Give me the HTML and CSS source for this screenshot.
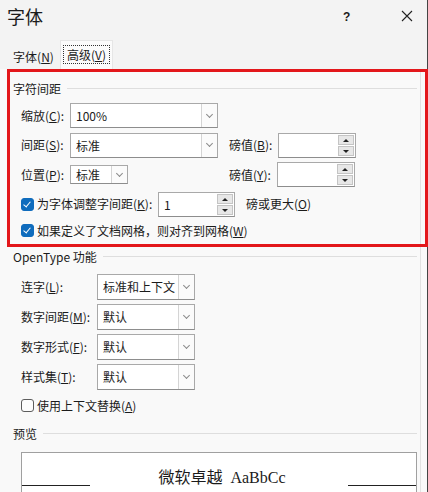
FILE: index.html
```html
<!DOCTYPE html>
<html lang="zh-CN">
<head>
  <meta charset="UTF-8">
  <title>字体</title>
  <link rel="stylesheet" href="styles.css">
</head>
<body>
  <div class="dialog">
    <div class="titlebar">
      <span class="title">字体</span>
      <span class="help">?</span>
      <span class="close">
        <svg width="12" height="12" viewBox="0 0 12 12"><path d="M1 1L11 11M11 1L1 11" stroke="#222" stroke-width="1.1" fill="none"/></svg>
      </span>
    </div>

    <div class="tabs">
      <span class="tab">字体(<u>N</u>)</span>
      <span class="tab active"><span class="focus">高级(<u>V</u>)</span></span>
    </div>

    <!-- 字符间距 -->
    <div class="group mark">
      <div class="legend"><span>字符间距</span></div>
      <div class="row first">
        <span class="lbl w49">缩放(<u>C</u>):</span>
        <div class="combo w148"><span class="val">100%</span><span class="drop"></span></div>
      </div>
      <div class="row">
        <span class="lbl w49">间距(<u>S</u>):</span>
        <div class="combo w148"><span class="val">标准</span><span class="drop"></span></div>
        <span class="lbl w49 ml11">磅值(<u>B</u>):</span>
        <div class="spin w78"><span class="val"></span><span class="arrows"><i class="up"></i><i class="down"></i></span></div>
      </div>
      <div class="row">
        <span class="lbl w49">位置(<u>P</u>):</span>
        <div class="cell w148"><div class="combo w58"><span class="val">标准</span><span class="drop"></span></div></div>
        <span class="lbl w48 ml11">磅值(<u>Y</u>):</span>
        <div class="spin w78"><span class="val"></span><span class="arrows"><i class="up"></i><i class="down"></i></span></div>
      </div>
      <div class="row">
        <span class="check on"></span>
        <span class="lbl w121">为字体调整字间距(<u>K</u>):</span>
        <div class="spin w77"><span class="val">1</span><span class="arrows"><i class="up"></i><i class="down"></i></span></div>
        <span class="lbl ml11">磅或更大(<u>O</u>)</span>
      </div>
      <div class="row short">
        <span class="check on"></span>
        <span class="lbl">如果定义了文档网格，则对齐到网格(<u>W</u>)</span>
      </div>
    </div>

    <!-- OpenType 功能 -->
    <div class="group opentype">
      <div class="legend"><span>OpenType 功能</span></div>
      <div class="row tall first">
        <span class="lbl w76">连字(<u>L</u>):</span>
        <div class="combo w98"><span class="val">标准和上下文</span><span class="drop"></span></div>
      </div>
      <div class="row tall">
        <span class="lbl w76">数字间距(<u>M</u>):</span>
        <div class="combo w98"><span class="val">默认</span><span class="drop"></span></div>
      </div>
      <div class="row tall">
        <span class="lbl w76">数字形式(<u>F</u>):</span>
        <div class="combo w98"><span class="val">默认</span><span class="drop"></span></div>
      </div>
      <div class="row tall">
        <span class="lbl w76">样式集(<u>T</u>):</span>
        <div class="combo w98"><span class="val">默认</span><span class="drop"></span></div>
      </div>
      <div class="row short opt">
        <span class="check"></span>
        <span class="lbl">使用上下文替换(<u>A</u>)</span>
      </div>
    </div>

    <!-- 预览 -->
    <div class="group preview">
      <div class="legend"><span>预览</span></div>
      <div class="preview-box">
        <span class="rule"></span>
        <span class="sample">微软卓越&nbsp; AaBbCc</span>
        <span class="rule"></span>
      </div>
    </div>
  </div>
</body>
</html>
```

FILE: styles.css
```css
:root {
  --bg: #f9f9f9;
  --text: #1b1b1b;
  --line: #dedede;
  --field: #ffffff;
  --field-border: #a9a9a9;
  --red: #e3171b;
  --blue: #0f6cbd;
}
* { margin: 0; padding: 0; box-sizing: border-box; }
body {
  font-family: "Noto Sans CJK SC", "Noto Sans", sans-serif;
  font-size: 12px;
  color: var(--text);
  background: var(--bg);
  overflow: hidden;
}
u { text-decoration: underline; text-underline-offset: 1px; }

.dialog {
  width: 428px;
  height: 492px;
  background: var(--bg);
  border-right: 1px solid #444;
  box-shadow: inset -6px 0 0 var(--bg), inset -7px 0 0 #e2e2e2;
}

/* 标题栏 */
.titlebar {
  height: 34px;
  display: flex;
  align-items: center;
  padding-left: 7px;
  background: #f3f3f3;
}
.title { font-size: 18px; line-height: 1; flex: 1; margin-top: -3px; }
.help { font-size: 12px; font-weight: bold; font-family: "Liberation Sans", sans-serif; width: 58px; margin-top: -1px; }
.close { width: 26px; display: flex; margin-top: -2px; }

/* 选项卡 */
.tabs {
  height: 35px;
  display: flex;
  align-items: flex-end;
  padding-left: 7px;
  background: #f3f3f3;
}
.tab {
  height: 25px;
  display: flex;
  align-items: center;
  justify-content: center;
  white-space: nowrap;
  width: 53px;
}
.tab.active {
  height: 29px;
  width: 53px;
  background: #fbfbfb;
  border: 1px solid #e6e6e6;
  border-bottom: none;
  padding: 3px 2px 5px;
}
.focus {
  border: 1px dotted #333;
  display: flex;
  align-items: center;
  justify-content: center;
  width: 47px;
  height: 19px;
}

/* 分组 */
.group {
  width: 421px;
  margin-left: 7px;
  border: 3px solid transparent;
  padding: 0 8px 0 3px;
}
.group.mark { border-color: var(--red); padding-top: 8px; padding-bottom: 3px; }
.group.opentype { padding-top: 0; margin-top: -1px; }
.group.preview { margin-top: 4px; }

.legend {
  height: 16px;
  display: flex;
  align-items: center;
  white-space: nowrap;
}
.legend::after {
  content: "";
  flex: 1;
  height: 1px;
  background: var(--line);
  margin-left: 6px;
}

.row {
  display: flex;
  align-items: center;
  height: 25px;
  margin-top: 4.5px;
  padding-left: 8px;
}
.row.first { margin-top: 7px; }
.row.tall { height: 26px; margin-top: 4px; }
.row.tall.first { margin-top: 9px; }
.row.short { height: 20px; margin-top: 4px; }
.row.opt { margin-top: 6px; }

.lbl { white-space: nowrap; line-height: 1; }
.w49 { width: 49px; }
.w48 { width: 48px; }
.w76 { width: 76px; }
.w121 { width: 121px; }
.ml11 { margin-left: 11px; }
.cell { display: flex; }
.cell.w148 { width: 148px; }

/* 下拉框 */
.combo, .spin {
  height: 100%;
  display: flex;
  background: var(--field);
  border: 1px solid var(--field-border);
  border-bottom-color: #8d8d8d;
}
.combo.w148 { width: 148px; }
.combo.w58 { width: 58px; }
.combo.w98 { width: 98px; }
.spin.w78 { width: 78px; }
.spin.w77 { width: 77px; }
.val {
  flex: 1;
  display: flex;
  align-items: center;
  padding-left: 5px;
  white-space: nowrap;
  overflow: hidden;
}
.drop {
  width: 16px;
  border-left: 1px solid #d4d4d4;
  background: #fbfbfb;
  position: relative;
}
.drop::after {
  content: "";
  position: absolute;
  left: 5px;
  top: 50%;
  width: 4px;
  height: 4px;
  margin-top: -4px;
  border-right: 1px solid #8a8a8a;
  border-bottom: 1px solid #8a8a8a;
  transform: rotate(45deg);
}

/* 数值框 */
.arrows {
  width: 17px;
  display: flex;
  flex-direction: column;
  padding: 1px 1px 1px 0;
  gap: 1px;
}
.arrows i {
  flex: 1;
  background: #e7e7e7;
  border: 1px solid #c4c4c4;
  position: relative;
}
.arrows i::after {
  content: "";
  position: absolute;
  left: 4px;
  top: 3px;
  border-left: 3px solid transparent;
  border-right: 3px solid transparent;
}
.arrows .up::after { border-bottom: 3px solid #222; }
.arrows .down::after { border-top: 3px solid #222; }

/* 复选框 */
.check {
  width: 13px;
  height: 13px;
  border-radius: 3px;
  border: 1px solid #5d5d5d;
  background: #fdfdfd;
  margin-right: 3px;
  flex: none;
}
.check.on {
  background: var(--blue);
  border-color: var(--blue);
  position: relative;
}
.check.on::after {
  content: "";
  position: absolute;
  left: 3px;
  top: 1px;
  width: 3px;
  height: 6px;
  border-right: 1.5px solid #fff;
  border-bottom: 1.5px solid #fff;
  transform: rotate(40deg);
}

/* 预览 */
.preview-box {
  margin: 10px 0 0 8px;
  height: 60px;
  background: #fff;
  border: 1px solid #a0a0a0;
  display: flex;
  align-items: flex-start;
  padding-top: 16px;
}
.rule {
  width: 68px;
  height: 1px;
  background: #222;
  margin-top: 16px;
}
.sample {
  flex: 1;
  text-align: center;
  font-family: "Liberation Serif", "Noto Sans CJK SC", serif;
  font-size: 16px;
  line-height: 18px;
  padding-left: 6px;
}
```
